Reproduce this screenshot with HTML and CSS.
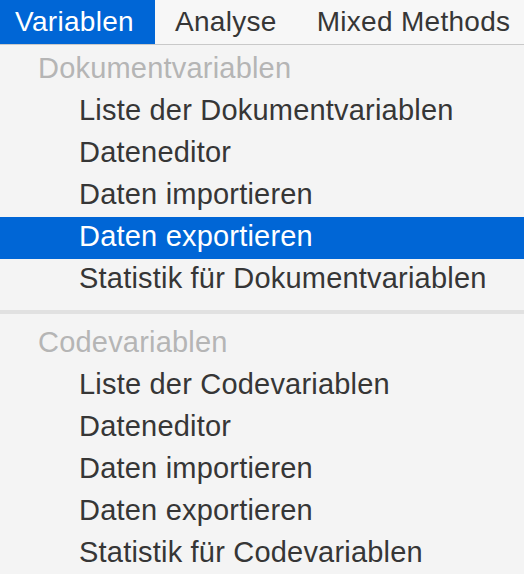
FILE: index.html
```html
<!DOCTYPE html>
<html lang="de">
<head>
  <meta charset="UTF-8" />
  <title>Variablen</title>
  <link rel="stylesheet" href="styles.css">
</head>
<body>
  <nav class="menubar">
    <div class="menu-title active">Variablen</div>
    <div class="menu-title">Analyse</div>
    <div class="menu-title">Mixed Methods</div>
  </nav>

  <ul class="dropdown">
    <li class="group">Dokumentvariablen</li>
    <li class="item">Liste der Dokumentvariablen</li>
    <li class="item">Dateneditor</li>
    <li class="item">Daten importieren</li>
    <li class="item selected">Daten exportieren</li>
    <li class="item">Statistik für Dokumentvariablen</li>
    <li class="separator"></li>
    <li class="group">Codevariablen</li>
    <li class="item">Liste der Codevariablen</li>
    <li class="item">Dateneditor</li>
    <li class="item">Daten importieren</li>
    <li class="item">Daten exportieren</li>
    <li class="item">Statistik für Codevariablen</li>
  </ul>
</body>
</html>
```

FILE: styles.css
```css
body {
  margin: 0;
  padding: 0;
  background-color: #f4f4f4;
  font-family: 'Liberation Sans', Arial, sans-serif;
  color: #363636;
  overflow: hidden;
}

.menubar {
  display: flex;
  height: 44px;
  background-color: #f7f7f7;
  border-bottom: 1px solid #c9c9c9;
  font-size: 28px;
  letter-spacing: 0.3px;
}

.menu-title {
  display: flex;
  align-items: center;
  flex-shrink: 0;
  white-space: nowrap;
  padding: 0 20px;
}

.menu-title.active {
  padding: 0 21px 0 15px;
  background-color: #0066d6;
  color: white;
}

.dropdown {
  list-style: none;
  margin: 0;
  padding: 4px 0 0;
  font-size: 29px;
  letter-spacing: 0.2px;
}

.dropdown li {
  box-sizing: border-box;
  height: 42px;
  padding-bottom: 3px;
  display: flex;
  align-items: center;
  white-space: nowrap;
}

.group {
  padding-left: 38px;
  color: #b5b5b5;
}

.item {
  padding-left: 79px;
}

.item.selected {
  background-color: #0066d6;
  color: white;
}

.dropdown li.separator {
  height: 4px;
  padding: 0;
  margin: 9px 0;
  background-color: #e1e1e1;
}
```
